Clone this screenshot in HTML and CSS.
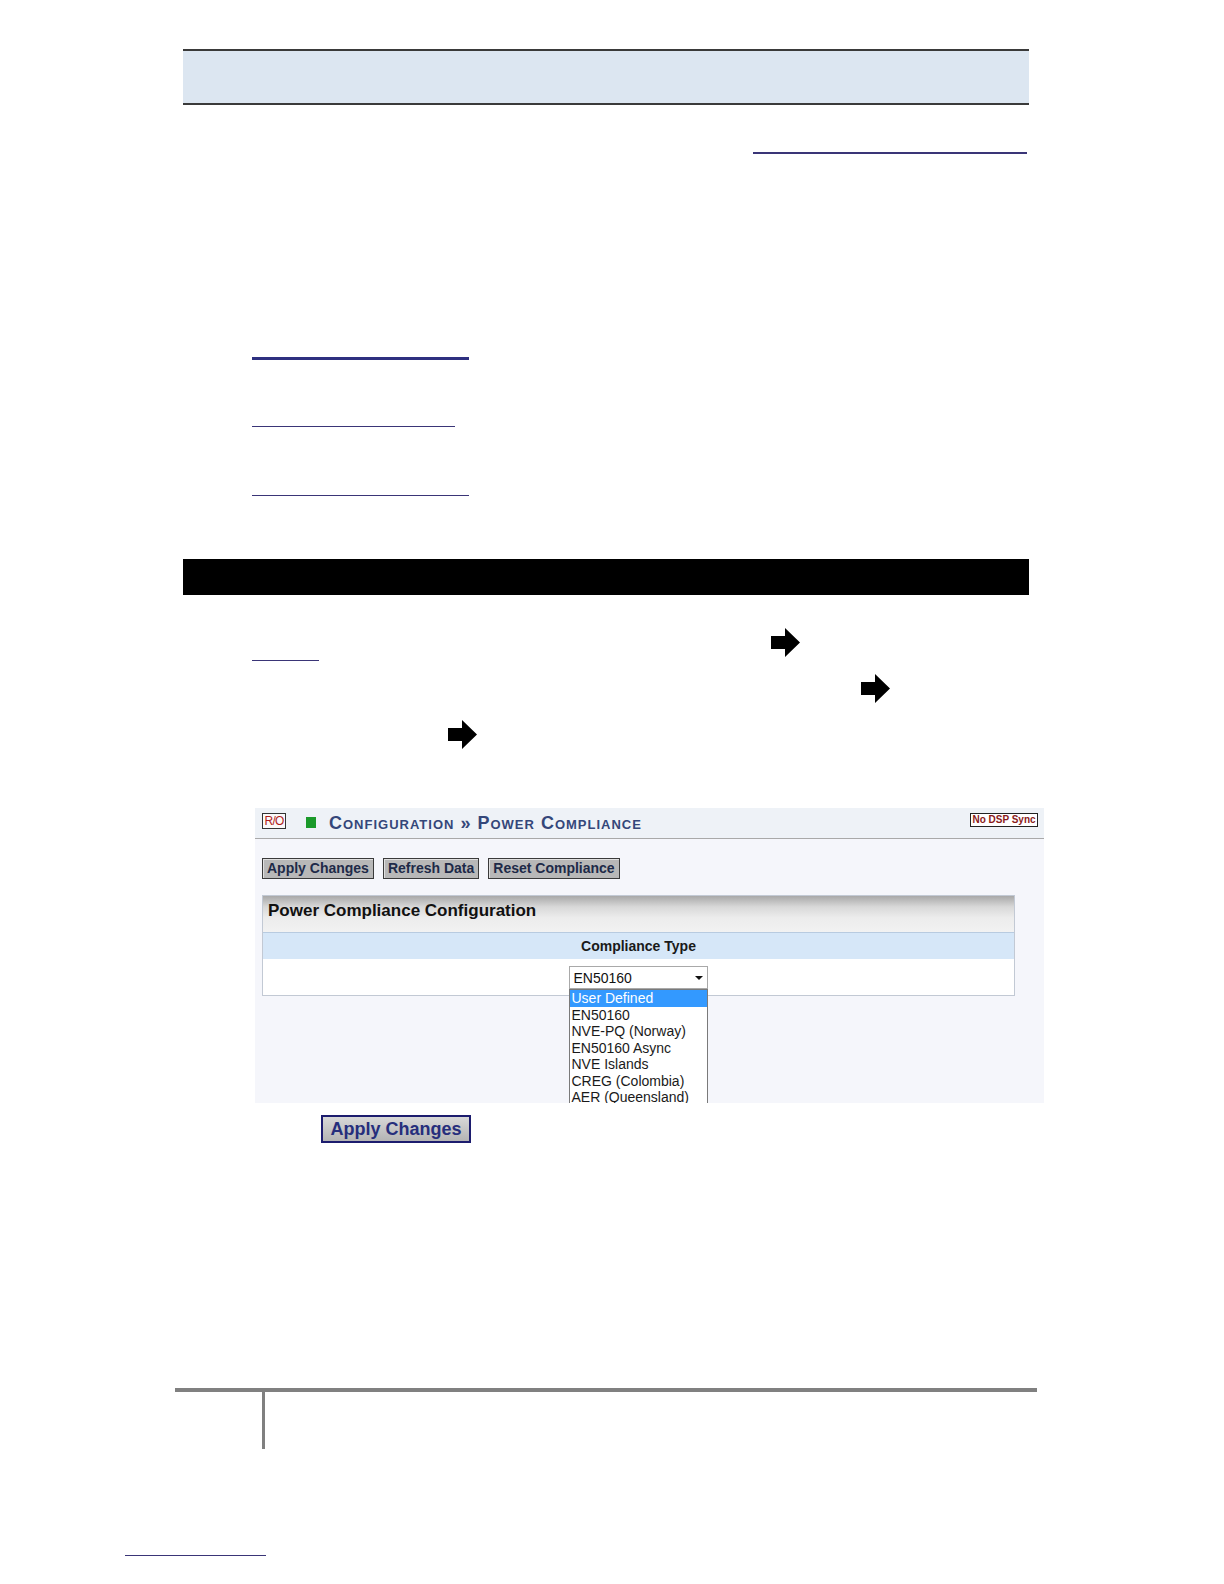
FILE: index.html
```html
<!DOCTYPE html>
<html>
<head>
<meta charset="utf-8">
<link rel="stylesheet" href="styles.css">
</head>
<body>
<div class="page">
  <div class="band"></div>
  <div class="uline top-link"></div>

  <div class="links">
    <div class="uline l1"></div>
    <div class="uline l2"></div>
    <div class="uline l3"></div>
  </div>

  <div class="blackbar"></div>

  <div class="steps">
    <div class="step s1"><svg class="arrow" viewBox="0 0 32 31"><path d="M2 9h14V1l15 14.5L16 30v-8H2z" fill="#000"/></svg></div>
    <div class="uline l4"></div>
    <div class="step s2"><svg class="arrow" viewBox="0 0 32 31"><path d="M2 9h14V1l15 14.5L16 30v-8H2z" fill="#000"/></svg></div>
    <div class="step s3"><svg class="arrow" viewBox="0 0 32 31"><path d="M2 9h14V1l15 14.5L16 30v-8H2z" fill="#000"/></svg></div>
  </div>

  <div class="shot">
    <div class="shot-head">
      <span class="ro">R/O</span>
      <span class="led"></span>
      <span class="crumb">Configuration » Power Compliance</span>
      <span class="nosync">No DSP Sync</span>
    </div>
    <div class="shot-body">
      <div class="btns">
        <span class="btn">Apply Changes</span>
        <span class="btn">Refresh Data</span>
        <span class="btn">Reset Compliance</span>
      </div>
      <div class="panel">
        <div class="panel-title">Power Compliance Configuration</div>
        <div class="panel-head">Compliance Type</div>
        <div class="panel-row">
          <div class="selwrap">
            <div class="select"><span>EN50160</span><span class="caret"></span></div>
            <div class="menu">
              <div class="opt sel">User Defined</div>
              <div class="opt">EN50160</div>
              <div class="opt">NVE-PQ (Norway)</div>
              <div class="opt">EN50160 Async</div>
              <div class="opt">NVE Islands</div>
              <div class="opt">CREG (Colombia)</div>
              <div class="opt">AER (Queensland)</div>
            </div>
          </div>
        </div>
      </div>
    </div>
  </div>

  <div class="bigbtn-row"><span class="bigbtn">Apply Changes</span></div>

  <div class="footline"></div>
  <div class="footvert"></div>
  <div class="uline bottom-link"></div>
</div>
</body>
</html>
```
FILE: styles.css
```css
html, body {
  margin: 0;
  padding: 0;
  background: #ffffff;
}
.page {
  display: flow-root;
  width: 1224px;
  height: 1584px;
  overflow: hidden;
  font-family: "Liberation Sans", Arial, sans-serif;
}
.band {
  margin: 49px 0 0 183px;
  width: 846px;
  height: 52px;
  background: #dce6f1;
  border-top: 2px solid #3a3a3a;
  border-bottom: 2px solid #3a3a3a;
}
.uline {
  height: 0;
  border-bottom: 1px solid #3a3577;
}
.top-link {
  margin: 47px 0 0 753px;
  width: 274px;
  border-bottom-width: 2px;
}
.links {
  margin-left: 252px;
}
.l1 {
  margin-top: 203px;
  width: 217px;
  border-bottom: 3px solid #2e3080;
}
.l2 {
  margin-top: 66px;
  width: 203px;
}
.l3 {
  margin-top: 68px;
  width: 217px;
}
.blackbar {
  margin: 63px 0 0 183px;
  width: 846px;
  height: 36px;
  background: #000000;
}
.steps {
  margin-left: 252px;
  padding-top: 32px;
}
.step {
  height: 31px;
  display: flex;
}
.arrow {
  width: 32px;
  height: 31px;
  display: block;
}
.s1 { padding-left: 517px; }
.s2 { padding-left: 607px; margin-top: 12px; }
.s3 { padding-left: 194px; margin-top: 15px; }
.l4 {
  margin-top: 2px;
  width: 67px;
}
.shot {
  margin: 58px 0 0 255px;
  width: 789px;
  height: 295px;
  overflow: hidden;
  background: #f5f6fb;
}
.shot-head {
  height: 30px;
  background: #eef2f7;
  border-bottom: 1px solid #a9a9a9;
  display: flex;
  align-items: center;
  padding: 0 6px 0 7px;
}
.ro {
  box-sizing: border-box;
  width: 24px;
  height: 16px;
  border: 1px solid #333;
  background: #fafafa;
  color: #b01c1c;
  font-size: 12px;
  line-height: 14px;
  letter-spacing: -0.8px;
  text-align: center;
  margin-top: -4px;
}
.led {
  width: 10px;
  height: 11px;
  background: #1a9a2a;
  margin-left: 20px;
  margin-top: -2px;
}
.crumb {
  margin-left: 13px;
  font-variant: small-caps;
  font-weight: bold;
  font-size: 18px;
  color: #34477a;
  letter-spacing: 1px;
  flex: 1;
}
.nosync {
  box-sizing: border-box;
  width: 68px;
  height: 14px;
  border: 1px solid #222;
  background: #fff;
  color: #8b1a1a;
  font-size: 10px;
  font-weight: bold;
  line-height: 12px;
  text-align: center;
  margin-top: -7px;
}
.shot-body {
  padding: 19px 0 0 7px;
}
.btns {
  display: flex;
  gap: 9px;
}
.btn {
  box-sizing: border-box;
  height: 21px;
  padding: 0 4px;
  background: #b8b8b8;
  border: 1px solid #3a3a3a;
  box-shadow: inset 1px 1px 0 #e0e0e0;
  color: #1e2a48;
  font-weight: bold;
  font-size: 14px;
  line-height: 19px;
}
.panel {
  margin-top: 16px;
  width: 751px;
  border: 1px solid #c2c9d4;
  background: #fff;
}
.panel-title {
  height: 36px;
  background: linear-gradient(#a8a8a8 0%, #d8d8d8 30%, #ececec 60%, #f2f2f2 100%);
  font-weight: bold;
  font-size: 17px;
  line-height: 30px;
  padding-left: 5px;
  color: #111;
}
.panel-head {
  height: 26px;
  background: #d6e7f8;
  border-top: 1px solid #b8cbe0;
  text-align: center;
  font-weight: bold;
  font-size: 14px;
  line-height: 26px;
  color: #1a1a1a;
}
.panel-row {
  height: 36px;
  display: flex;
  justify-content: center;
  padding-top: 7px;
  box-sizing: border-box;
}
.selwrap {
  position: relative;
  margin-left: -1px;
}
.select {
  box-sizing: border-box;
  width: 139px;
  height: 23px;
  border: 1px solid #a9a9a9;
  background: #fff;
  display: flex;
  align-items: center;
  justify-content: space-between;
  padding: 0 4px 0 4px;
  font-size: 14px;
  color: #111;
}
.caret {
  width: 0;
  height: 0;
  border-left: 4px solid transparent;
  border-right: 4px solid transparent;
  border-top: 4px solid #111;
}
.menu {
  position: absolute;
  left: 0;
  top: 23px;
  box-sizing: border-box;
  width: 139px;
  background: #fff;
  border: 1px solid #7a7a7a;
  font-size: 14px;
  line-height: 16.5px;
  color: #1a1a1a;
}
.opt {
  height: 16.5px;
  padding-left: 2px;
  white-space: nowrap;
}
.opt.sel {
  background: #3399ff;
  color: #fff;
}
.bigbtn-row {
  margin: 12px 0 0 321px;
  display: flex;
}
.bigbtn {
  box-sizing: border-box;
  width: 150px;
  height: 28px;
  border: 2px solid #1c1c6e;
  background: linear-gradient(#d8d8d8, #b4b4b4);
  color: #262e7c;
  font-weight: bold;
  font-size: 18px;
  line-height: 24px;
  text-align: center;
}
.footline {
  margin: 245px 0 0 175px;
  width: 862px;
  height: 4px;
  background: #808080;
}
.footvert {
  margin-left: 262px;
  width: 3px;
  height: 57px;
  background: #808080;
}
.bottom-link {
  margin: 106px 0 0 125px;
  width: 141px;
}
```
